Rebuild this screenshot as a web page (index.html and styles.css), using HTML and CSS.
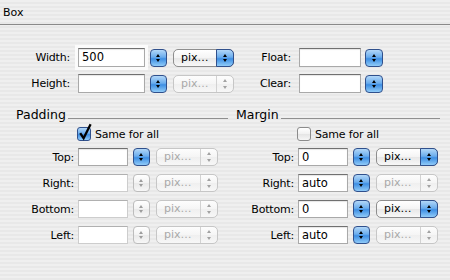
FILE: index.html
```
<!DOCTYPE html>
<html>
<head>
<meta charset="utf-8">
<link rel="stylesheet" href="styles.css">
</head>
<body>
<div class="title">Box</div>

<div class="top">
  <div class="trow">
    <span class="lbl l1">Width:</span>
    <div class="field f1 focus">500</div>
    <span class="step"></span>
    <div class="pop"><span class="txt">pix…</span><span class="arr"></span></div>
    <span class="lbl l2">Float:</span>
    <div class="field f2"></div>
    <span class="step s2"></span>
  </div>
  <div class="trow">
    <span class="lbl l1">Height:</span>
    <div class="field f1"></div>
    <span class="step"></span>
    <div class="pop off"><span class="txt">pix…</span><span class="arr"></span></div>
    <span class="lbl l2">Clear:</span>
    <div class="field f2"></div>
    <span class="step s2"></span>
  </div>
</div>

<div class="sections">
  <section class="group">
    <div class="ghead"><span>Padding</span><i class="rule"></i></div>
    <div class="cbrow"><span class="cb on"><svg class="tick" width="14" height="18" viewBox="0 0 14 18"><path d="M2.2 10.2 L5.6 15.2 L12.6 1.2" fill="none" stroke="#000" stroke-width="2.3" stroke-linejoin="miter"/></svg></span><span>Same for all</span></div>
    <div class="frows">
      <div class="frow"><span class="lbl">Top:</span><div class="field"></div><span class="step"></span><div class="pop off"><span class="txt">pix…</span><span class="arr"></span></div></div>
      <div class="frow"><span class="lbl">Right:</span><div class="field dis"></div><span class="step off"></span><div class="pop off"><span class="txt">pix…</span><span class="arr"></span></div></div>
      <div class="frow"><span class="lbl">Bottom:</span><div class="field dis"></div><span class="step off"></span><div class="pop off"><span class="txt">pix…</span><span class="arr"></span></div></div>
      <div class="frow"><span class="lbl">Left:</span><div class="field dis"></div><span class="step off"></span><div class="pop off"><span class="txt">pix…</span><span class="arr"></span></div></div>
    </div>
  </section>
  <section class="group">
    <div class="ghead"><span>Margin</span><i class="rule"></i></div>
    <div class="cbrow"><span class="cb"></span><span>Same for all</span></div>
    <div class="frows">
      <div class="frow"><span class="lbl">Top:</span><div class="field">0</div><span class="step"></span><div class="pop"><span class="txt">pix…</span><span class="arr"></span></div></div>
      <div class="frow"><span class="lbl">Right:</span><div class="field">auto</div><span class="step"></span><div class="pop off"><span class="txt">pix…</span><span class="arr"></span></div></div>
      <div class="frow"><span class="lbl">Bottom:</span><div class="field">0</div><span class="step"></span><div class="pop"><span class="txt">pix…</span><span class="arr"></span></div></div>
      <div class="frow"><span class="lbl">Left:</span><div class="field">auto</div><span class="step"></span><div class="pop off"><span class="txt">pix…</span><span class="arr"></span></div></div>
    </div>
  </section>
</div>
</body>
</html>
```

FILE: styles.css
```
html, body {
  margin: 0;
  padding: 0;
}
body {
  width: 450px;
  height: 280px;
  overflow: hidden;
  background: repeating-linear-gradient(to bottom, #efefef 0 2px, #e8e8e8 2px 4px);
  font-family: "DejaVu Sans", sans-serif;
  font-size: 11px;
  color: #000;
}

.title {
  height: 18px;
  padding: 6px 0 0 3px;
  line-height: 13px;
  border-bottom: 1px solid #8a8a8a;
}

.top {
  margin-top: 23px;
  display: flex;
  flex-direction: column;
  gap: 7px;
}
.trow {
  display: flex;
  align-items: center;
  height: 19px;
}
.lbl {
  flex: none;
  text-align: right;
  letter-spacing: -0.2px;
}
.trow .l1 { width: 70px; margin-right: 8px; }
.trow .l2 { width: 57px; margin-right: 8px; }

.field {
  flex: none;
  box-sizing: border-box;
  height: 19px;
  padding: 0 3px;
  background: #fff;
  border: 1px solid #a9a9a9;
  border-top-color: #707070;
  box-shadow: inset 0 1px 1px rgba(0, 0, 0, 0.1);
  font-size: 11.5px;
  line-height: 17px;
}
.trow .f1 { width: 67px; }
.trow .f2 { width: 62px; }
.field.focus {
  box-shadow: inset 0 1px 1px rgba(0, 0, 0, 0.1), 0 0 0 3px #fbfbfb;
}
.field.dis {
  border-color: #cdcdcd;
  border-top-color: #b0b0b0;
  box-shadow: none;
}

.step {
  flex: none;
  position: relative;
  box-sizing: border-box;
  width: 17px;
  height: 18px;
  margin-left: 5px;
  border: 1px solid #30508c;
  border-radius: 4px;
  background: linear-gradient(#b2d7f8, #6aaced 45%, #3d8ee3 55%, #90cbf8);
}
.trow .s2 { margin-left: 4px; width: 18px; }
.step::before, .step::after {
  content: "";
  position: absolute;
  left: 50%;
  margin-left: -2.5px;
  border-left: 2.5px solid transparent;
  border-right: 2.5px solid transparent;
}
.step::before { top: 4px; border-bottom: 3px solid #000; }
.step::after { bottom: 4px; border-top: 3px solid #000; }
.step.off {
  border-color: #bcbcbc;
  background: linear-gradient(#ffffff, #f3f3f3 50%, #e9e9e9 50%, #f7f7f7);
}
.step.off::before { border-bottom-color: #9c9c9c; }
.step.off::after { border-top-color: #9c9c9c; }

.pop {
  flex: none;
  display: flex;
  box-sizing: border-box;
  width: 61px;
  height: 18px;
  margin-left: 6px;
  border: 1px solid #8e8e8e;
  border-radius: 5px;
  background: linear-gradient(#ffffff, #f4f4f4 50%, #e7e7e7 50%, #f8f8f8);
}
.pop .txt {
  flex: 1;
  padding-left: 7px;
  line-height: 16px;
}
.pop .arr {
  flex: none;
  position: relative;
  width: 16px;
  margin: -1px -1px -1px 0;
  border: 1px solid #30508c;
  border-radius: 0 5px 5px 0;
  background: linear-gradient(#b2d7f8, #6aaced 45%, #3d8ee3 55%, #90cbf8);
}
.pop .arr::before, .pop .arr::after {
  content: "";
  position: absolute;
  left: 50%;
  margin-left: -2.5px;
  border-left: 2.5px solid transparent;
  border-right: 2.5px solid transparent;
}
.pop .arr::before { top: 4px; border-bottom: 3px solid #000; }
.pop .arr::after { bottom: 4px; border-top: 3px solid #000; }
.pop.off {
  border-color: #c6c6c6;
  background: linear-gradient(#fdfdfd, #f5f5f5 50%, #efefef 50%, #f7f7f7);
  color: #a9a9a9;
}
.pop.off .arr {
  margin: 0;
  border: none;
  border-left: 1px solid #d2d2d2;
  background: none;
}
.pop.off .arr::before { top: 3px; border-bottom-color: #a2a2a2; }
.pop.off .arr::after { bottom: 3px; border-top-color: #a2a2a2; }

.sections {
  display: grid;
  grid-template-columns: 212px 204px;
  column-gap: 8px;
  margin: 14px 0 0 16px;
}
.group {
  display: flex;
  flex-direction: column;
}
.ghead {
  display: flex;
  align-items: flex-end;
  height: 15px;
  font-size: 12.5px;
  line-height: 15px;
}
.ghead .rule {
  flex: 1;
  height: 1px;
  margin: 0 0 3px 2px;
  background: #8f8f8f;
}

.cbrow {
  display: flex;
  align-items: center;
  gap: 4px;
  height: 14px;
  margin-top: 5px;
  padding-left: 61px;
  letter-spacing: -0.2px;
}
.cb {
  position: relative;
  flex: none;
  box-sizing: border-box;
  width: 14px;
  height: 14px;
  border: 1px solid #8b8b8b;
  border-radius: 3px;
  background: linear-gradient(#ffffff, #f1f1f1 50%, #e4e4e4 50%, #f6f6f6);
}
.cb.on {
  border-color: #30508c;
  background: linear-gradient(#b2d7f8, #6aaced 45%, #3d8ee3 55%, #90cbf8);
}
.cb .tick {
  position: absolute;
  left: 0;
  top: -5px;
}

.frows {
  display: flex;
  flex-direction: column;
  gap: 8px;
  margin-top: 7px;
}
.frow {
  display: flex;
  align-items: center;
  height: 18px;
}
.frow .lbl { width: 58px; margin-right: 4px; }
.frow .field { width: 50px; height: 18px; line-height: 16px; }
.frow .pop { width: 62px; }
```
